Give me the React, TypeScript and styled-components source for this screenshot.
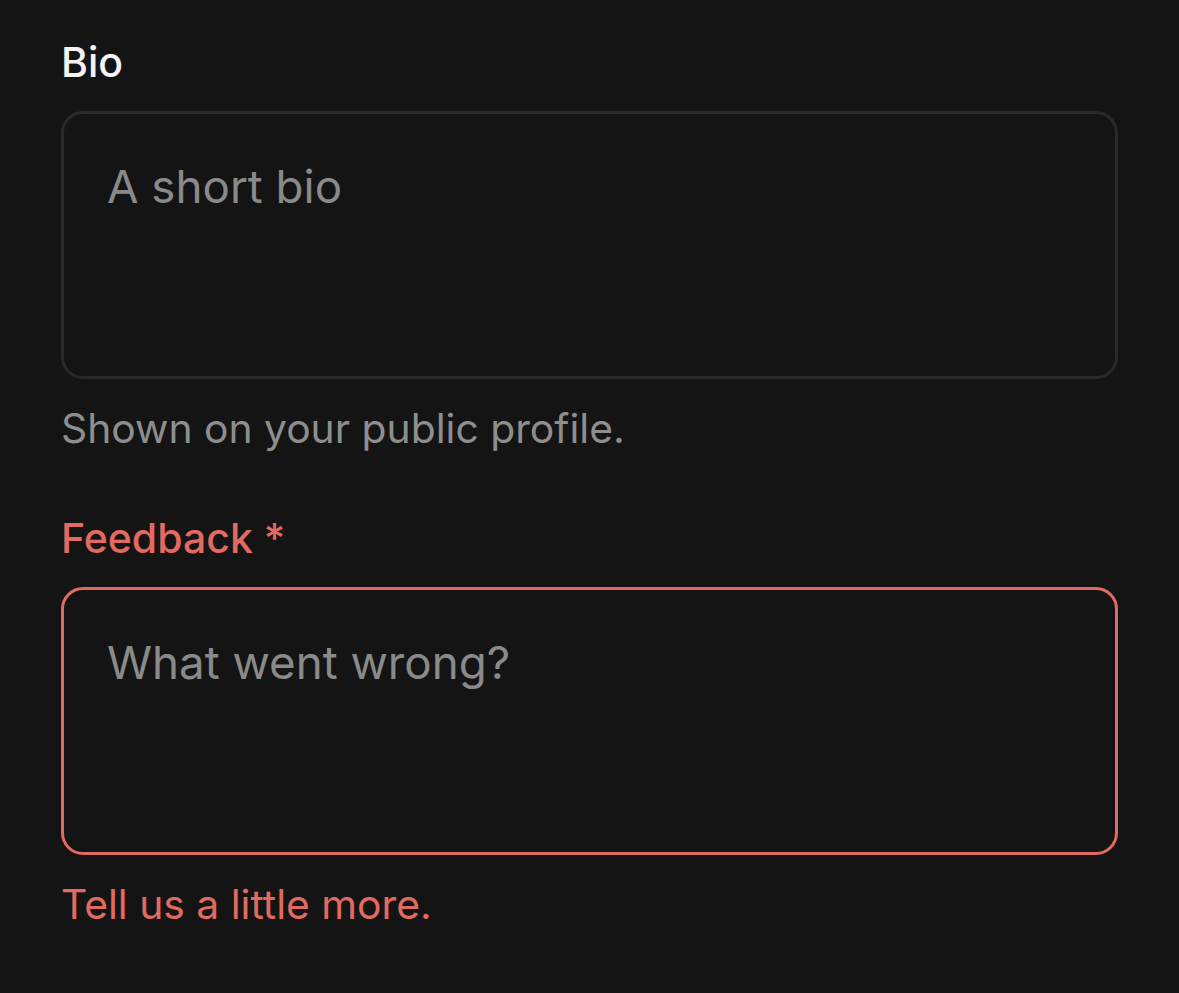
import styled, { createGlobalStyle } from "styled-components"

const GlobalStyle = createGlobalStyle`
  html, body {
    margin: 0;
    padding: 0;
    background: #141414;
  }
  body {
    font-family: Inter, "Noto Sans", "Liberation Sans", sans-serif;
    -webkit-font-smoothing: antialiased;
  }
`

const Page = styled.div`
  min-height: 993px;
  box-sizing: border-box;
  padding: 34px 61px 0;
  display: flex;
  flex-direction: column;
  gap: 54px;
`

const Field = styled.div`
  display: flex;
  flex-direction: column;
`

const Label = styled.label<{ $error?: boolean }>`
  font-size: 41px;
  line-height: 56px;
  font-weight: 500;
  color: ${(p) => (p.$error ? "#e26a60" : "#f4f4f4")};
`

const TextArea = styled.textarea<{ $error?: boolean }>`
  margin-top: 21px;
  box-sizing: border-box;
  width: 100%;
  height: 268px;
  padding: 39px 43px;
  border: 3px solid ${(p) => (p.$error ? "#e26a60" : "#2a2a2a")};
  border-radius: 22px;
  background: #141414;
  color: #f4f4f4;
  font-family: inherit;
  font-size: 45.7px;
  line-height: 1.5;
  resize: none;
  outline: none;

  &::placeholder {
    color: #8a8a8a;
  }
`

const Hint = styled.p<{ $error?: boolean }>`
  margin: 21px 0 0;
  font-size: 40.8px;
  line-height: 56px;
  color: ${(p) => (p.$error ? "#e26a60" : "#8e8e8e")};
`

export default function App() {
  return (
    <>
      <GlobalStyle />
      <Page>
        <Field>
          <Label htmlFor="bio">Bio</Label>
          <TextArea id="bio" placeholder="A short bio" />
          <Hint>Shown on your public profile.</Hint>
        </Field>
        <Field>
          <Label htmlFor="feedback" $error>
            Feedback *
          </Label>
          <TextArea id="feedback" placeholder="What went wrong?" $error />
          <Hint $error>Tell us a little more.</Hint>
        </Field>
      </Page>
    </>
  )
}
